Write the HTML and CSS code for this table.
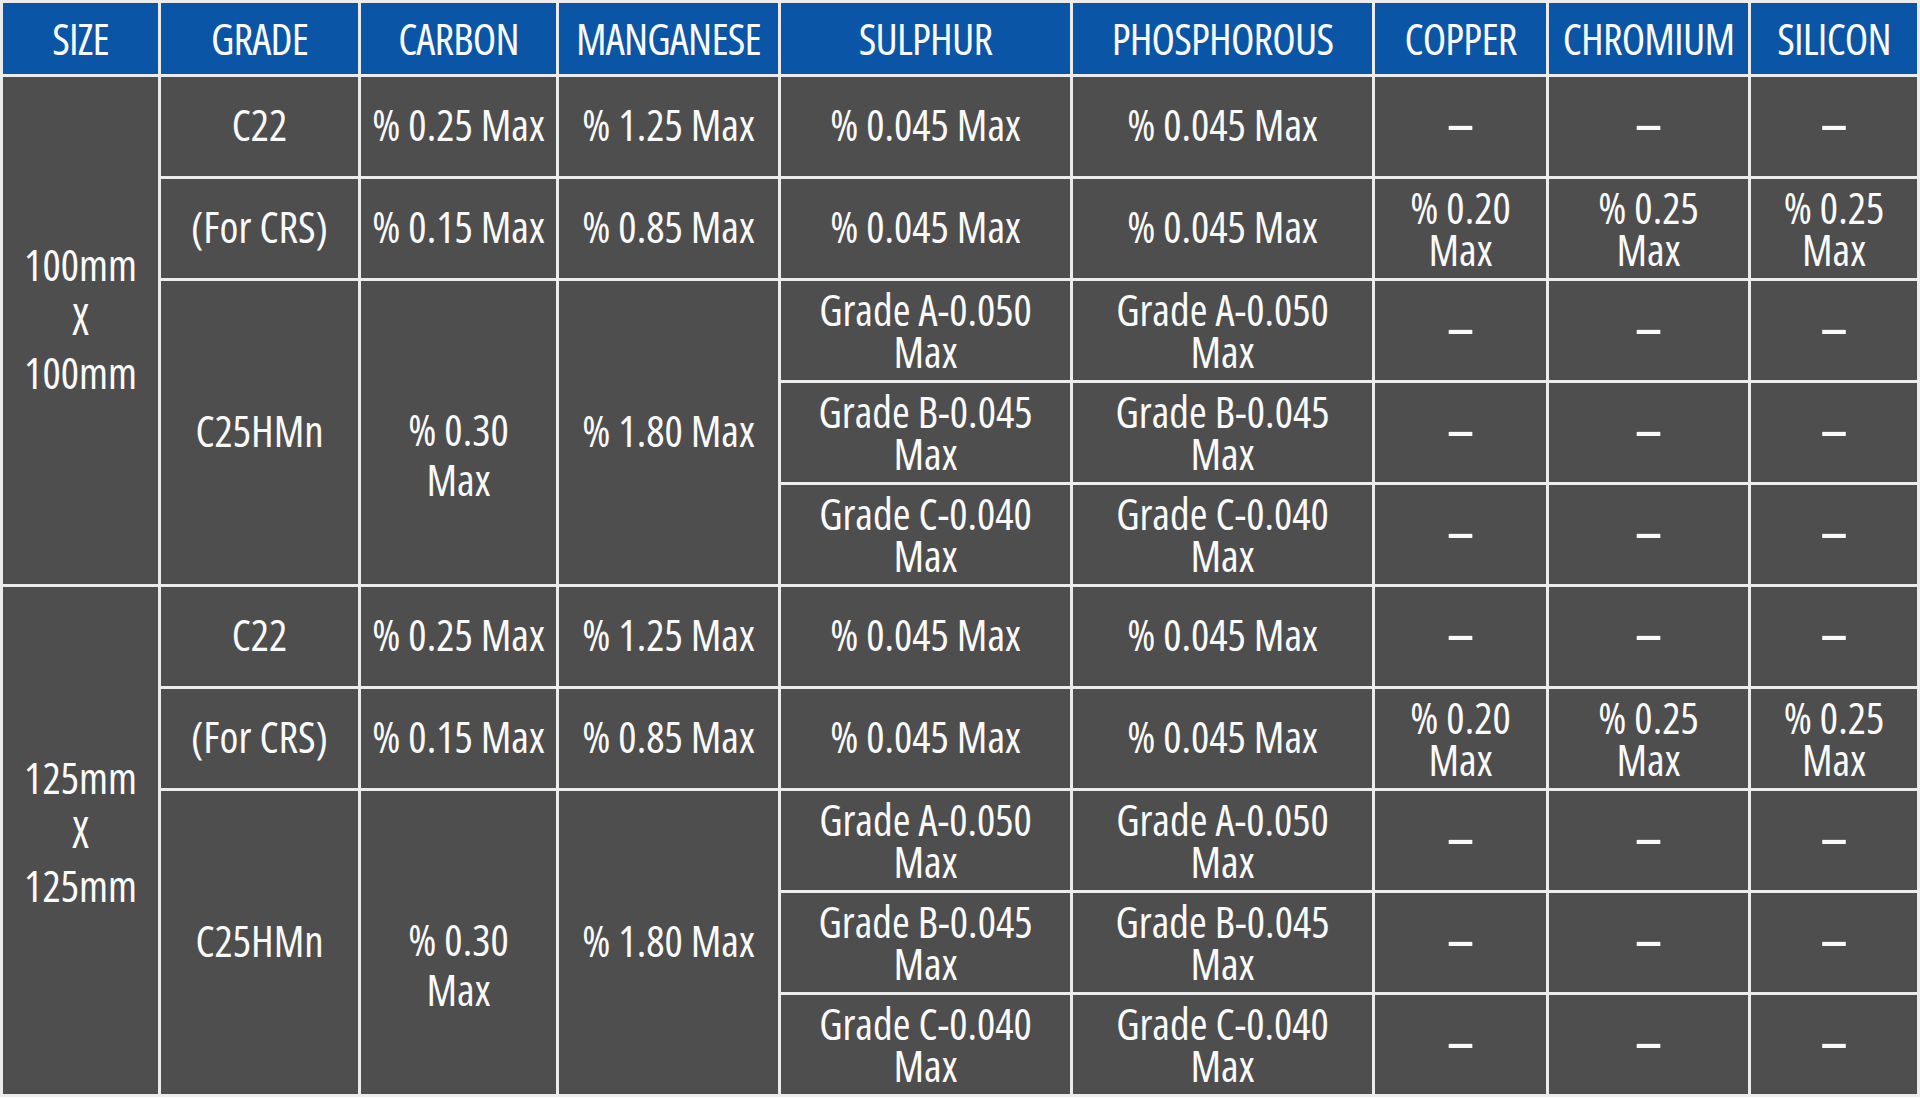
FILE: index.html
```html
<!DOCTYPE html>
<html lang="en">
<head>
<meta charset="utf-8">
<title>Chemical Composition</title>
<link rel="stylesheet" href="styles.css">
</head>
<body>
<table class="spec">
  <colgroup>
    <col class="c-size"><col class="c-grade"><col class="c-carbon"><col class="c-mn"><col class="c-s"><col class="c-p"><col class="c-cu"><col class="c-cr"><col class="c-si">
  </colgroup>
  <thead>
    <tr class="head">
      <th>SIZE</th><th>GRADE</th><th>CARBON</th><th>MANGANESE</th><th>SULPHUR</th><th>PHOSPHOROUS</th><th>COPPER</th><th>CHROMIUM</th><th>SILICON</th>
    </tr>
  </thead>
  <tbody>
    <tr>
      <td rowspan="5" class="size">100mm<br>X<br>100mm</td>
      <td>C22</td><td>% 0.25 Max</td><td>% 1.25 Max</td><td>% 0.045 Max</td><td>% 0.045 Max</td>
      <td class="dash">–</td><td class="dash">–</td><td class="dash">–</td>
    </tr>
    <tr>
      <td>(For CRS)</td><td>% 0.15 Max</td><td>% 0.85 Max</td><td>% 0.045 Max</td><td>% 0.045 Max</td>
      <td class="two">% 0.20<br>Max</td><td class="two">% 0.25<br>Max</td><td class="two">% 0.25<br>Max</td>
    </tr>
    <tr>
      <td rowspan="3">C25HMn</td>
      <td rowspan="3" class="carbon">% 0.30<br>Max</td>
      <td rowspan="3">% 1.80 Max</td>
      <td class="two">Grade A-0.050<br>Max</td><td class="two">Grade A-0.050<br>Max</td>
      <td class="dash">–</td><td class="dash">–</td><td class="dash">–</td>
    </tr>
    <tr>
      <td class="two">Grade B-0.045<br>Max</td><td class="two">Grade B-0.045<br>Max</td>
      <td class="dash">–</td><td class="dash">–</td><td class="dash">–</td>
    </tr>
    <tr>
      <td class="two">Grade C-0.040<br>Max</td><td class="two">Grade C-0.040<br>Max</td>
      <td class="dash">–</td><td class="dash">–</td><td class="dash">–</td>
    </tr>
    <tr>
      <td rowspan="5" class="size size-low">125mm<br>X<br>125mm</td>
      <td>C22</td><td>% 0.25 Max</td><td>% 1.25 Max</td><td>% 0.045 Max</td><td>% 0.045 Max</td>
      <td class="dash">–</td><td class="dash">–</td><td class="dash">–</td>
    </tr>
    <tr>
      <td>(For CRS)</td><td>% 0.15 Max</td><td>% 0.85 Max</td><td>% 0.045 Max</td><td>% 0.045 Max</td>
      <td class="two">% 0.20<br>Max</td><td class="two">% 0.25<br>Max</td><td class="two">% 0.25<br>Max</td>
    </tr>
    <tr>
      <td rowspan="3">C25HMn</td>
      <td rowspan="3" class="carbon">% 0.30<br>Max</td>
      <td rowspan="3">% 1.80 Max</td>
      <td class="two">Grade A-0.050<br>Max</td><td class="two">Grade A-0.050<br>Max</td>
      <td class="dash">–</td><td class="dash">–</td><td class="dash">–</td>
    </tr>
    <tr>
      <td class="two">Grade B-0.045<br>Max</td><td class="two">Grade B-0.045<br>Max</td>
      <td class="dash">–</td><td class="dash">–</td><td class="dash">–</td>
    </tr>
    <tr>
      <td class="two">Grade C-0.040<br>Max</td><td class="two">Grade C-0.040<br>Max</td>
      <td class="dash">–</td><td class="dash">–</td><td class="dash">–</td>
    </tr>
  </tbody>
</table>
</body>
</html>
```
FILE: styles.css
```css
html, body {
  margin: 0;
  padding: 0;
  background: #ffffff;
}

.spec {
  width: 1920px;
  table-layout: fixed;
  border-collapse: separate;
  border-spacing: 3px;
  background: #ececec;
  font-family: "Open Sans", "DejaVu Sans", sans-serif;
  font-stretch: condensed;
  color: #fafafa;
}

.c-size   { width: 155px; }
.c-grade  { width: 197px; }
.c-carbon { width: 195px; }
.c-mn     { width: 219px; }
.c-s      { width: 289px; }
.c-p      { width: 299px; }
.c-cu     { width: 171px; }
.c-cr     { width: 199px; }
.c-si     { width: 166px; }

.spec th,
.spec td {
  padding: 0;
  text-align: center;
  vertical-align: middle;
  white-space: nowrap;
}

.head th {
  height: 71px;
  background: #0b55a6;
  font-size: 43px;
  font-weight: 400;
  letter-spacing: -0.8px;
  line-height: 50px;
  padding-top: 1px;
  box-sizing: border-box;
}

.spec tbody tr {
  height: 99px;
}

.spec td {
  background: #4e4e4e;
  font-size: 43px;
  line-height: 52px;
  padding-bottom: 4px;
}

.spec td.two {
  line-height: 42px;
  padding-bottom: 0;
}

.spec td.size {
  line-height: 54px;
  padding-bottom: 24px;
}

.spec td.size-low {
  padding-bottom: 17px;
}

.spec td.carbon {
  line-height: 50px;
  padding-top: 48px;
}

.spec td.dash {
  font-size: 56px;
  font-stretch: normal;
  padding-bottom: 11px;
}
```
